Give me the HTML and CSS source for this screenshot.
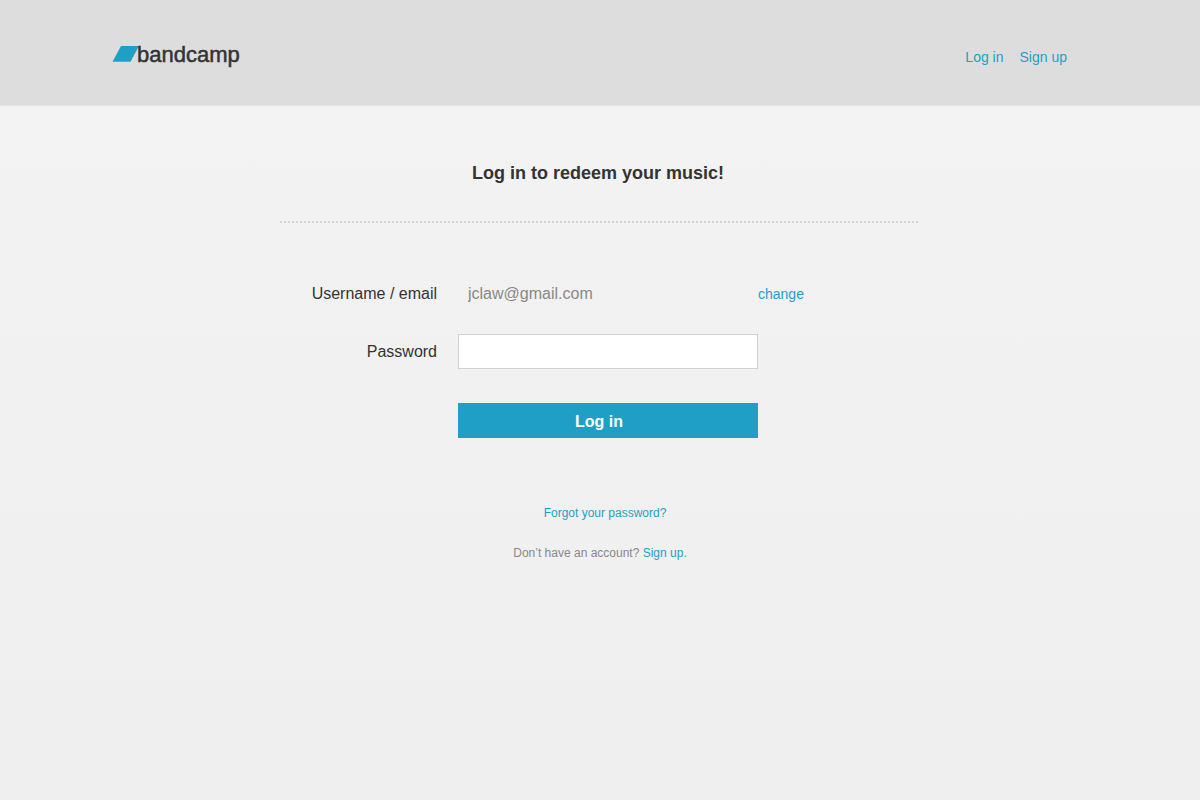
FILE: index.html
```html
<!DOCTYPE html>
<html lang="en">
<head>
<meta charset="utf-8">
<meta name="viewport" content="width=device-width, initial-scale=1">
<title>Log in | Bandcamp</title>
<link rel="stylesheet" href="styles.css">
</head>
<body>
<header class="site-header">
  <div class="header-inner">
    <a class="logo" href="#" aria-label="bandcamp">
      <svg width="130" height="30" viewBox="0 0 130 30">
        <polygon class="logo-mark" points="0.5,21.8 9,6 27,6 18.5,21.8"/>
        <text class="logo-word" x="25" y="22">bandcamp</text>
      </svg>
    </a>
    <nav class="site-nav">
      <a href="#">Log in</a>
      <a href="#">Sign up</a>
    </nav>
  </div>
</header>
<main class="login">
  <h1 class="title">Log in to redeem your music!</h1>
  <form class="form">
    <label class="label" for="username">Username / email</label>
    <input class="field field-fixed" id="username" type="text" value="jclaw@gmail.com" readonly>
    <a class="change" href="#">change</a>
    <label class="label" for="password">Password</label>
    <input class="field" id="password" type="password">
    <button class="submit" type="submit">Log in</button>
  </form>
  <div class="help">
    <a class="forgot" href="#">Forgot your password?</a>
    <p class="signup">Don’t have an account? <a href="#">Sign up.</a></p>
  </div>
</main>
</body>
</html>
```
FILE: styles.css
```css
* {
  box-sizing: border-box;
}

body {
  margin: 0;
  min-height: 100vh;
  background: linear-gradient(#f3f3f3, #efefef);
  color: #333;
  font-family: "Liberation Sans", Arial, sans-serif;
  font-size: 16px;
}

a {
  color: #1f9fc6;
  text-decoration: none;
}

.site-header {
  padding: 40px 24px 35px;
  background: #ddd;
  border-bottom: 1px solid #e6e6e6;
}

.header-inner {
  display: flex;
  justify-content: space-between;
  max-width: 976px;
  margin: 0 auto;
  padding-right: 21px;
}

.logo,
.logo svg {
  display: block;
}

.logo-mark {
  fill: #1f9fc6;
}

.logo-word {
  fill: #333;
  stroke: #333;
  stroke-width: 0.5;
  font-size: 22px;
}

.site-nav {
  display: flex;
  gap: 16px;
  padding-top: 9px;
  font-size: 14px;
  line-height: 16px;
}

.login {
  max-width: 640px;
  margin: 0 auto;
  padding-top: 55px;
}

.title {
  margin: 0;
  padding-right: 4px;
  font-size: 18px;
  line-height: 24px;
  text-align: center;
}

.title::after {
  content: "";
  display: block;
  height: 2px;
  margin: 36px -4px 0 0;
  background: repeating-linear-gradient(90deg, #d2d2d2 0 2px, transparent 2px 4px);
}

.form {
  display: grid;
  grid-template-columns: 157px 300px 1fr;
  gap: 23px 21px;
  align-items: center;
  padding-top: 53px;
}

.label {
  text-align: right;
}

.label,
.change {
  line-height: 18px;
}

.field {
  width: 100%;
  height: 35px;
  padding: 0 9px;
  border: 1px solid #d0d0d0;
  border-radius: 0;
  background: #fff;
  font: inherit;
}

.field-fixed {
  background: transparent;
  border-color: transparent;
  color: #888;
  outline: 0;
}

.change {
  margin-left: -21px;
  font-size: 14px;
}

.submit {
  grid-column: 2;
  height: 35px;
  margin-top: 11px;
  padding: 2px 18px 0 0;
  border: 0;
  background: #1f9fc6;
  color: #fff;
  font: bold 16px "Liberation Sans", Arial, sans-serif;
}

.help {
  display: flex;
  flex-direction: column;
  align-items: center;
  gap: 24px;
  padding-top: 67px;
  font-size: 12px;
  line-height: 16px;
}

.forgot {
  padding-left: 10px;
}

.signup {
  margin: 0;
  color: #888;
}
```
